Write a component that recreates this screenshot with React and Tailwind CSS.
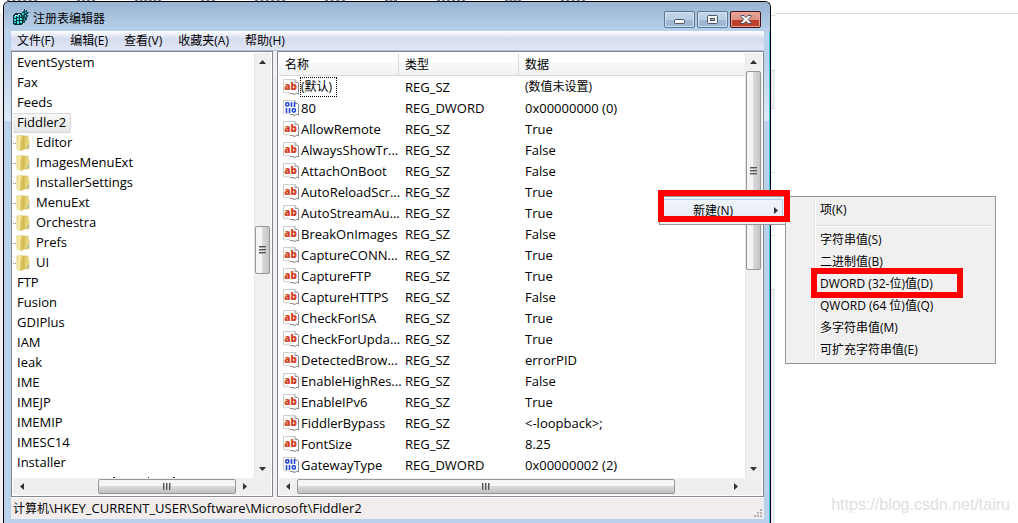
import React from "react";

const treeItems = [
  { name: "EventSystem" },
  { name: "Fax" },
  { name: "Feeds" },
  { name: "Fiddler2", selected: true },
  { name: "Editor", child: true },
  { name: "ImagesMenuExt", child: true },
  { name: "InstallerSettings", child: true },
  { name: "MenuExt", child: true },
  { name: "Orchestra", child: true },
  { name: "Prefs", child: true },
  { name: "UI", child: true },
  { name: "FTP" },
  { name: "Fusion" },
  { name: "GDIPlus" },
  { name: "IAM" },
  { name: "Ieak" },
  { name: "IME" },
  { name: "IMEJP" },
  { name: "IMEMIP" },
  { name: "IMESC14" },
  { name: "Installer" },
];

const values = [
  ["(默认)", "REG_SZ", "(数值未设置)"],
  ["80", "REG_DWORD", "0x00000000 (0)"],
  ["AllowRemote", "REG_SZ", "True"],
  ["AlwaysShowTr...", "REG_SZ", "False"],
  ["AttachOnBoot", "REG_SZ", "False"],
  ["AutoReloadScr...", "REG_SZ", "True"],
  ["AutoStreamAu...", "REG_SZ", "True"],
  ["BreakOnImages", "REG_SZ", "False"],
  ["CaptureCONN...", "REG_SZ", "True"],
  ["CaptureFTP", "REG_SZ", "True"],
  ["CaptureHTTPS", "REG_SZ", "False"],
  ["CheckForISA", "REG_SZ", "True"],
  ["CheckForUpda...", "REG_SZ", "True"],
  ["DetectedBrow...", "REG_SZ", "errorPID"],
  ["EnableHighRes...", "REG_SZ", "False"],
  ["EnableIPv6", "REG_SZ", "True"],
  ["FiddlerBypass", "REG_SZ", "<-loopback>;"],
  ["FontSize", "REG_SZ", "8.25"],
  ["GatewayType", "REG_DWORD", "0x00000002 (2)"],
];

const menus = ["文件(F)", "编辑(E)", "查看(V)", "收藏夹(A)", "帮助(H)"];

const newItems = [
  "字符串值(S)",
  "二进制值(B)",
  "DWORD (32-位)值(D)",
  "QWORD (64 位)值(Q)",
  "多字符串值(M)",
  "可扩充字符串值(E)",
];

function RegeditIcon() {
  return (
    <svg width="16" height="16" viewBox="0 0 16 16" shapeRendering="crispEdges" aria-hidden="true">
      <path d="M0 6l3-2h6v3h2v7l-3 2H1l-1-2z" fill="#0b3338" />
      <path d="M1 7h2v2H1zM4 6h2v2H4zM7 6h1v2H7zM1 10h2v2H1zM4 9h2v2H4zM7 9h2v2H7zM1 13h2v1H1zM4 12h2v3H4zM7 12h2v2H7z" fill="#35e3e3" />
      <path d="M2 6h2v1H2zM5 5h2v1H5z" fill="#eaffff" />
      <path d="M8 4l2-2 1-1 1 1 2-1v2h2l-2 2 1 2-1 3-2 3-1 2-1-1V8L8 7z" fill="#0c4a50" />
      <path d="M9 4h2v2H9zM12 3h2v1h-2zM12 6h1v2h-1z" fill="#2cc5c8" />
      <path d="M11 9h1v3h-1z" fill="#1a8b90" />
      <path d="M11 0h1v1h-1z" fill="#0c4a50" />
    </svg>
  );
}

function FolderIcon() {
  return (
    <svg width="14" height="16" viewBox="0 0 14 16" className="shrink-0" aria-hidden="true">
      <defs>
        <linearGradient id="folderFront" x1="0" x2="1">
          <stop offset="0" stopColor="#f0e28a" />
          <stop offset="0.45" stopColor="#faf2b0" />
          <stop offset="1" stopColor="#d8ba4c" />
        </linearGradient>
        <linearGradient id="folderBack" x1="0" x2="1">
          <stop offset="0" stopColor="#ae8726" />
          <stop offset="0.5" stopColor="#e2ca68" />
          <stop offset="1" stopColor="#efdf8c" />
        </linearGradient>
      </defs>
      <path d="M5 1h7v3l1 1v9H5z" fill="url(#folderBack)" stroke="#d2ba60" strokeWidth="0.6" />
      <path d="M1 1l5-.5 1 .8V15l-2 .8-4-2z" fill="url(#folderFront)" stroke="#d9c260" strokeWidth="0.6" />
      <path d="M5 4v11" stroke="#c9a43c" strokeWidth="0.8" />
      <path d="M12 10v3" stroke="#74b8c9" />
    </svg>
  );
}

function ValueIcon({ binary }) {
  return (
    <svg width="16" height="16" viewBox="0 0 16 16" className="shrink-0" aria-hidden="true">
      <path
        d="M.5 .5h11.500l3.500 3.500v11l-2-.7-1.500 1.200-3-1-2 0-2-1.500-2 1-2.500-.5z"
        fill="#fff"
        stroke="#cccccc"
      />
      <path d="M12 .5V3.500h3" fill="none" stroke="#9a9a9a" />
      <path d="M15.500 4v11l-2-1-1.500 1.500-3-1-2 0" fill="none" stroke="#8d8d8d" />
      {binary ? (
        <g fill="none" stroke="#2546d8" strokeWidth="1.600">
          <rect x="2.800" y="2.800" width="3" height="3.200" rx="1" />
          <path d="M8.500 2v5M11.500 2v5M3.500 8v5M6.500 8v5" />
          <rect x="9.300" y="8.800" width="3" height="3.200" rx="1" />
        </g>
      ) : (
        <text
          x="7.500"
          y="11"
          textAnchor="middle"
          fontSize="10"
          fontWeight="800"
          fill="#d2401f"
        >
          ab
        </text>
      )}
    </svg>
  );
}

function Arrow({ dir }) {
  const paths = {
    up: "M0 4L3.500 0 7 4z",
    down: "M0 0L3.500 4 7 0z",
    left: "M4 0L0 3.500 4 7z",
    right: "M0 0L4 3.500 0 7z",
  };
  const vertical = dir === "up" || dir === "down";
  return (
    <svg
      width={vertical ? 7 : 4}
      height={vertical ? 4 : 7}
      viewBox={vertical ? "0 0 7 4" : "0 0 4 7"}
      aria-hidden="true"
    >
      <path d={paths[dir]} fill="#333" />
    </svg>
  );
}

function Grip({ vertical }) {
  return (
    <svg width="8" height="8" viewBox="0 0 8 8" shapeRendering="crispEdges" aria-hidden="true">
      <path
        d={vertical ? "M0 0h7v1H0zM0 3h7v1H0zM0 6h7v1H0z" : "M0 0h1v7H0zM3 0h1v7H3zM6 0h1v7H6z"}
        fill="#555"
      />
      <path
        d={vertical ? "M0 1h7v1H0zM0 4h7v1H0zM0 7h7v1H0z" : "M1 0h1v7H1zM4 0h1v7H4zM7 0h1v7H7z"}
        fill="#aaa"
      />
    </svg>
  );
}

function VScroll({ thumb }) {
  return (
    <div className="flex w-[17px] shrink-0 flex-col border-l border-[#e6e6e6] bg-[#f0f0f0] pr-px">
      <button aria-label="向上滚动" className="flex h-[18px] shrink-0 items-center justify-center">
        <Arrow dir="up" />
      </button>
      <div className="min-h-0 flex-1">
        <div
          className={`${thumb} flex items-center justify-center rounded-xs border border-[#979797] bg-linear-to-r from-[#f5f5f5] from-45% via-[#dadadc] via-50% to-[#c4c5c8]`}
        >
          <Grip vertical />
        </div>
      </div>
      <button aria-label="向下滚动" className="flex h-[18px] shrink-0 items-center justify-center">
        <Arrow dir="down" />
      </button>
    </div>
  );
}

function HScroll({ thumb }) {
  return (
    <div className="flex h-[17px] shrink-0 bg-[#efefef] pr-[17px]">
      <button aria-label="向左滚动" className="flex w-[18px] shrink-0 items-center justify-center">
        <Arrow dir="left" />
      </button>
      <div className="min-w-0 flex-1 py-px">
        <div
          className={`${thumb} flex h-[15px] items-center justify-center rounded-xs border border-[#979797] bg-linear-to-b from-[#f5f5f5] from-45% via-[#dadadc] via-50% to-[#c0c1c4]`}
        >
          <Grip />
        </div>
      </div>
      <button aria-label="向右滚动" className="flex w-[18px] shrink-0 items-center justify-center">
        <Arrow dir="right" />
      </button>
    </div>
  );
}

function CaptionButton({ label, close, children }) {
  return (
    <button
      aria-label={label}
      className={
        close
          ? "flex h-[17px] w-[31px] items-center justify-center rounded-xs border border-[#43131b] bg-linear-to-b from-[#e8a599] from-0% via-[#dc9184] via-50% to-[#bd4029] to-55% shadow-[inset_0_0_0_1px_#e6a597]"
          : "flex h-[17px] w-[31px] items-center justify-center rounded-xs border border-[#5d7692] bg-linear-to-b from-[#c3d7ea] from-0% via-[#b8cfe5] via-50% to-[#9db8d3] to-55% shadow-[inset_0_0_0_1px_#cfe1f2]"
      }
    >
      {children}
    </button>
  );
}

function TitleBar() {
  return (
    <header className="flex h-[29px] shrink-0 items-center bg-linear-to-b from-[#98b4d2] to-[#b9d1ea] px-[9px]">
      <RegeditIcon />
      <h1 className="flex-1 pt-1 pl-1 text-[12px] leading-5">注册表编辑器</h1>
      <div className="flex gap-[2px] pt-[6px]">
        <CaptionButton label="最小化">
          <svg width="12" height="10" viewBox="0 0 12 10" aria-hidden="true">
            <rect x=".5" y="4.500" width="10" height="4" rx="1" fill="#f6f6f6" stroke="#4c5566" />
          </svg>
        </CaptionButton>
        <CaptionButton label="最大化">
          <svg width="11" height="10" viewBox="0 0 11 10" aria-hidden="true">
            <rect x=".5" y=".5" width="10" height="8" rx="1" fill="#f6f6f6" stroke="#4c5566" />
            <rect x="3.500" y="3.500" width="4" height="2" fill="#a6c0d9" stroke="#4c5566" />
          </svg>
        </CaptionButton>
        <CaptionButton label="关闭" close>
          <svg width="12" height="10" viewBox="0 0 12 10" aria-hidden="true">
            <path
              d="M1 .5h3L6 2.600 8 .5h3v1L8.300 4.500 11 7.500v1H8L6 6.400 4 8.500H1v-1L3.700 4.500 1 1.500z"
              fill="#f8f8f8"
              stroke="#4f5364"
            />
          </svg>
        </CaptionButton>
      </div>
    </header>
  );
}

function TreePane() {
  return (
    <section className="flex w-[262px] shrink-0 flex-col border border-[#828790] bg-white p-px">
      <div className="flex min-h-0 flex-1">
        <div className="flex min-w-0 flex-1 flex-col justify-between overflow-hidden">
          <ul className="text-[13px] leading-[18px]">
            {treeItems.map((item) => (
              <li key={item.name} className="flex h-5 items-center">
                {item.child ? (
                  <>
                    <span className="w-[3px] border-b border-dotted border-[#888]" />
                    <FolderIcon />
                    <span className="pb-[2px] pl-[6px]">{item.name}</span>
                  </>
                ) : item.selected ? (
                  <span className="rounded-r-xs border border-l-0 border-[#d9d9d9] bg-linear-to-b from-[#f8f8f8] to-[#e6e6e6] pr-1 pl-1 leading-[17px] pb-px">
                    {item.name}
                  </span>
                ) : (
                  <span className="pb-[2px] pl-1">{item.name}</span>
                )}
              </li>
            ))}
          </ul>
          <svg width="180" height="1" className="shrink-0" shapeRendering="crispEdges" aria-hidden="true">
            <path d="M100 0h2v1h-2zM135 0h1v1h-1zM160 0h2v1h-2z" fill="#333" />
          </svg>
        </div>
        <VScroll thumb="mt-[155px] h-[48px]" />
      </div>
      <HScroll thumb="ml-[67px] w-[138px]" />
    </section>
  );
}

function ValuesPane() {
  return (
    <section className="flex min-w-0 flex-1 flex-col border border-[#828790] bg-white p-px">
      <div className="flex min-h-0 flex-1">
        <div className="min-w-0 flex-1 overflow-hidden">
          <table className="w-full table-fixed border-separate border-spacing-0 text-[13px]">
            <colgroup>
              <col className="w-[120px]" />
              <col className="w-[120px]" />
              <col />
            </colgroup>
            <thead>
              <tr className="h-[23px] bg-linear-to-b from-white from-40% via-[#f7f8fa] via-45% to-[#f1f2f4] text-left text-[12px]">
                <th className="border-r border-b border-[#d9dadc] p-0 pt-[2px] pl-[6px] font-normal">名称</th>
                <th className="border-r border-b border-[#d9dadc] p-0 pt-[2px] pl-[6px] font-normal">类型</th>
                <th className="border-b border-[#d9dadc] p-0 pt-[2px] pl-[6px] font-normal">数据</th>
              </tr>
            </thead>
            <tbody>
              {values.map(([name, type, data], i) => (
                <tr key={name} className="h-[21px] leading-5 whitespace-nowrap">
                  <td className="p-0 pl-1">
                    <div className="flex items-center gap-px">
                      <ValueIcon binary={type === "REG_DWORD"} />
                      {i === 0 ? (
                        <span className="border border-dotted border-black pr-1 text-[12px] leading-[18px]">
                          {name}
                        </span>
                      ) : (
                        <span className="pl-px">{name}</span>
                      )}
                    </div>
                  </td>
                  <td className="p-0 pl-[6px]">{type}</td>
                  <td className={i === 0 ? "p-0 pl-[6px] text-[12px]" : "p-0 pl-[6px]"}>{data}</td>
                </tr>
              ))}
            </tbody>
          </table>
        </div>
        <VScroll thumb="h-[199px]" />
      </div>
      <HScroll thumb="w-[378px]" />
    </section>
  );
}

function ContextMenus() {
  return (
    <>
      <div className="absolute top-[196px] left-[659px] w-[127px] border border-[#979797] bg-[#f0f0f0] p-[2px]">
        <button className="flex h-[23px] w-full items-center border border-[#aecff7] bg-linear-to-b from-[#f0f4fa] to-[#e6ecf5] pr-1 pl-[30px] text-[12px]">
          <span className="flex-1 text-left">新建(N)</span>
          <Arrow dir="right" />
        </button>
      </div>
      <div className="absolute top-[196px] left-[785px] w-[211px] border border-[#979797] bg-[#f0f0f0] p-[2px] text-[12px]">
        <div className="flex">
          <div className="w-[27px] shrink-0 border-r border-[#e2e3e3]" />
          <div className="flex min-w-0 flex-1 flex-col border-l border-white">
            <button className="h-[22px] pl-1 text-left">项(K)</button>
            <hr className="mt-1 mb-[2px] border-t border-b border-t-[#dcdcdc] border-b-white" />
            {newItems.map((item) => (
              <button key={item} className="h-[22px] pl-1 text-left">
                {item}
              </button>
            ))}
          </div>
        </div>
      </div>
      <div className="pointer-events-none absolute top-[190px] left-[658px] h-[32px] w-[132px] border-6 border-[#fe0000]" />
      <div className="pointer-events-none absolute top-[268px] left-[811px] h-[30px] w-[152px] border-6 border-[#fe0000]" />
    </>
  );
}

export default function App() {
  return (
    <main className="relative flex h-screen overflow-hidden bg-white font-['Open_Sans','Noto_Sans_CJK_SC',sans-serif] text-black">
      <div className="flex w-[3px] shrink-0 flex-col pt-[13px]">
        <div className="flex-1 bg-[#f1f1f1]" />
      </div>
      <div className="flex w-[768px] shrink-0 flex-col">
        <div className="flex h-px shrink-0 gap-10 overflow-hidden px-1">
          {[30, 18, 26, 14, 30, 20, 12, 28, 16, 24].map((w, i) => (
            <div key={i} className="shrink-0 border-t border-dashed border-[#6f7f96]" style={{ width: w }} />
          ))}
        </div>
        <div className="flex min-h-0 flex-1 flex-col overflow-hidden rounded-t-md border-x border-t border-black bg-[#b9d1ea]">
          <TitleBar />
          <div className="flex min-h-0 flex-1">
            <div className="w-[7px] shrink-0">
              <div className="h-[90px] bg-linear-to-b from-[#b9d1ea] from-30% to-[#dce9f7]" />
            </div>
            <div className="flex min-h-0 min-w-0 flex-1 flex-col pb-1">
              <nav className="flex h-[20px] shrink-0 items-center gap-4 border-b border-[#b6bccc] bg-linear-to-b from-white from-0% via-[#d5dcef] via-40% to-[#e1e6f6] pl-[6px] text-[12px]">
                {menus.map((m) => (
                  <button key={m} className="leading-4">{m}</button>
                ))}
              </nav>
              <div className="flex min-h-0 flex-1 gap-1 bg-[#f0f0f0]">
                <TreePane />
                <ValuesPane />
              </div>
              <footer className="flex h-[22px] shrink-0 items-start border-t border-white bg-[#f1edec] pl-[2px] text-[13px] leading-5">
                <span className="flex-1">
                  <span className="text-[12px]">计算机</span>\HKEY_CURRENT_USER\Software\Microsoft\Fiddler2
                </span>
                <svg width="10" height="10" viewBox="0 0 10 10" className="self-end" aria-hidden="true">
                  <path d="M6 0h2v2H6zM3 3h2v2H3zM6 3h2v2H6zM0 6h2v2H0zM3 6h2v2H3zM6 6h2v2H6z" fill="#b5b1b1" />
                </svg>
              </footer>
            </div>
            <div className="w-[6px] shrink-0 border-r border-[#3cc4e6]">
              <div className="h-[90px] bg-linear-to-b from-[#b9d1ea] from-30% to-[#dce9f7]" />
            </div>
          </div>
        </div>
      </div>
      <div className="flex w-1 shrink-0 flex-col pt-[15px]">
        <div className="h-[55px] border-t border-[#dedede]" />
        <div className="h-[39px] border-y border-[#d6d6da] bg-[#ececf0]" />
        <div className="h-[63px]" />
        <div className="h-[63px] border-t border-[#dedede]" />
        <div className="h-[54px] border-t border-[#dedede]" />
        <div className="flex-1 border-t border-[#d0d0d0] bg-[#ececf0]" />
      </div>
      <div className="flex min-w-0 flex-1 flex-col justify-between pt-[13px] pb-2">
        <div className="border-t border-[#dedede]" />
        <p className="pr-2 text-right font-['Liberation_Sans',sans-serif] text-[16px] leading-5 text-[#e0e0e0]">
          https://blog.csdn.net/tairu
        </p>
      </div>
      <ContextMenus />
    </main>
  );
}
